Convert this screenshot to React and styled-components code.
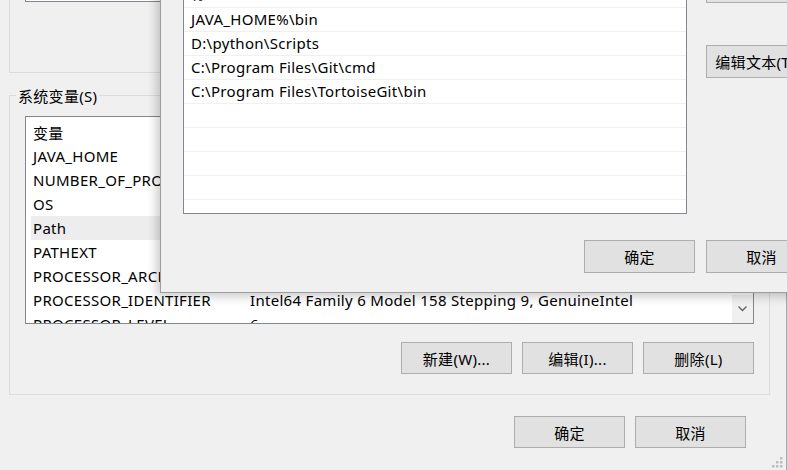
import React from "react";
import styled, { createGlobalStyle } from "styled-components";

const GlobalStyle = createGlobalStyle`
  html, body {
    margin: 0;
    padding: 0;
    background: #f0f0f0;
    overflow: hidden;
  }
  body {
    font-family: "Noto Sans", "Noto Sans CJK SC", sans-serif;
    font-size: 15px;
    letter-spacing: 0.3px;
    color: #000;
  }
`;

const Screen = styled.div`
  position: relative;
  width: 787px;
  height: 470px;
  overflow: hidden;
  background: #f0f0f0;
`;

const MainWindow = styled.div`
  position: relative;
  width: 787px;
  height: 470px;
  box-sizing: border-box;
  border-right: 1px solid #a9a9a9;
  padding-left: 9px;
  display: flex;
  flex-direction: column;
  align-items: flex-start;
`;

const UserGroup = styled.div`
  width: 761px;
  height: 73px;
  box-sizing: border-box;
  border: 1px solid #dcdcdc;
  border-top: none;
  padding: 0 15px;
`;

const UserListTail = styled.div`
  width: 729px;
  height: 2px;
  box-sizing: border-box;
  background: #fff;
  border: 1px solid #828790;
  border-top: none;
`;

const SysGroup = styled.div`
  margin-top: 22px;
  width: 761px;
  box-sizing: border-box;
  border: 1px solid #dcdcdc;
  padding: 0 15px 20px;
  display: flex;
  flex-direction: column;
`;

const GroupTitle = styled.div`
  align-self: flex-start;
  margin: -8px 0 0 -9px;
  padding: 0 2px;
  line-height: 17px;
  background: #f0f0f0;
`;

const VarList = styled.div`
  margin-top: 11px;
  width: 729px;
  height: 208px;
  box-sizing: border-box;
  border: 1px solid #828790;
  background: #fff;
  display: flex;
  overflow: hidden;
`;

const VarRows = styled.div`
  flex: 1;
  padding: 3px 0 0 5px;
`;

const VarRow = styled.div`
  display: flex;
  align-items: center;
  height: 24px;
  background: ${(p) => (p.$selected ? "#ededed" : "transparent")};
`;

const VarCell = styled.div`
  box-sizing: border-box;
  width: ${(p) => p.$width || "auto"};
  flex-shrink: 0;
  padding-left: 2px;
  white-space: nowrap;
  overflow: hidden;
`;

const ScrollBar = styled.div`
  width: 21px;
  display: flex;
  flex-direction: column;
  justify-content: flex-end;
  background: #fff;
`;

const ScrollButton = styled.div`
  height: 28px;
  background: #f0f0f0;
  display: flex;
  align-items: center;
  justify-content: center;
`;

const ButtonRow = styled.div`
  display: flex;
  justify-content: flex-end;
  gap: ${(p) => p.$gap || 10}px;
  margin-top: ${(p) => p.$top || 0}px;
  margin-right: ${(p) => p.$right || 0}px;
  align-self: stretch;
`;

const WinButton = styled.button`
  width: 111px;
  height: ${(p) => p.$h || 32}px;
  box-sizing: border-box;
  padding: 0;
  background: #e1e1e1;
  border: 1px solid #adadad;
  border-radius: 0;
  font-family: "Noto Sans", "Noto Sans CJK SC", sans-serif;
  font-size: 15px;
  letter-spacing: 0.3px;
  color: #000;
  white-space: nowrap;
  overflow: hidden;
`;

const Grip = styled.svg`
  position: absolute;
  right: 3px;
  bottom: 2px;
`;

const Dialog = styled.div`
  position: absolute;
  left: 160px;
  top: -40px;
  background: #f0f0f0;
  border: 1px solid #9c9c9c;
  box-shadow: -3px 3px 10px rgba(0, 0, 0, 0.22);
  padding: 0 22px 19px 22px;
  display: flex;
  flex-direction: column;
`;

const DialogBody = styled.div`
  display: flex;
  gap: 19px;
  align-items: flex-start;
`;

const PathList = styled.div`
  margin-top: 22px;
  width: 504px;
  height: 231px;
  box-sizing: border-box;
  border: 1px solid #828790;
  background: #fff;
  overflow: hidden;
`;

const PathRow = styled.div`
  height: 24px;
  box-sizing: border-box;
  border-bottom: 1px solid #f0f0f0;
  padding-left: 7px;
  line-height: 23px;
  white-space: nowrap;
`;

const SideButtons = styled.div`
  margin-top: 9px;
  display: flex;
  flex-direction: column;
  gap: 42px;
`;

const vars = [
  ["变量", ""],
  ["JAVA_HOME", ""],
  ["NUMBER_OF_PROCESSORS", ""],
  ["OS", ""],
  ["Path", ""],
  ["PATHEXT", ""],
  ["PROCESSOR_ARCHITECTURE", ""],
  ["PROCESSOR_IDENTIFIER", "Intel64 Family 6 Model 158 Stepping 9, GenuineIntel"],
  ["PROCESSOR_LEVEL", "6"],
];

const paths = [
  "%",
  "JAVA_HOME%\\bin",
  "D:\\python\\Scripts",
  "C:\\Program Files\\Git\\cmd",
  "C:\\Program Files\\TortoiseGit\\bin",
  "",
  "",
  "",
  "",
  "",
];

const App = () => {
  return (
    <Screen>
      <GlobalStyle />
      <MainWindow>
        <UserGroup>
          <UserListTail />
        </UserGroup>
        <SysGroup>
          <GroupTitle>系统变量(S)</GroupTitle>
          <VarList>
            <VarRows>
              {vars.map(([name, value]) => (
                <VarRow key={name} $selected={name === "Path"}>
                  <VarCell $width="217px">{name}</VarCell>
                  <VarCell>{value}</VarCell>
                </VarRow>
              ))}
            </VarRows>
            <ScrollBar>
              <ScrollButton>
                <svg width="9" height="6" viewBox="0 0 9 6">
                  <path d="M0.5 0.5 L4.5 4.5 L8.5 0.5" fill="none" stroke="#606060" strokeWidth="1.3" />
                </svg>
              </ScrollButton>
            </ScrollBar>
          </VarList>
          <ButtonRow $top={18}>
            <WinButton>新建(W)...</WinButton>
            <WinButton>编辑(I)...</WinButton>
            <WinButton>删除(L)</WinButton>
          </ButtonRow>
        </SysGroup>
        <ButtonRow $top={21} $right={40}>
          <WinButton>确定</WinButton>
          <WinButton>取消</WinButton>
        </ButtonRow>
        <Grip width="12" height="12" viewBox="0 0 12 12">
          {[
            [9, 1],
            [5, 5],
            [9, 5],
            [1, 9],
            [5, 9],
            [9, 9],
          ].map(([x, y]) => (
            <rect key={`${x}-${y}`} x={x} y={y} width="2.5" height="2.5" fill="#bdbdbd" />
          ))}
        </Grip>
      </MainWindow>

      <Dialog>
        <DialogBody>
          <PathList>
            {paths.map((p, i) => (
              <PathRow key={i}>{p}</PathRow>
            ))}
          </PathList>
          <SideButtons>
            <WinButton $h={33}>下移(O)</WinButton>
            <WinButton $h={33}>编辑文本(T)...</WinButton>
          </SideButtons>
        </DialogBody>
        <ButtonRow $top={26} $gap={11}>
          <WinButton $h={33}>确定</WinButton>
          <WinButton $h={33}>取消</WinButton>
        </ButtonRow>
      </Dialog>
    </Screen>
  );
};

export default App;
